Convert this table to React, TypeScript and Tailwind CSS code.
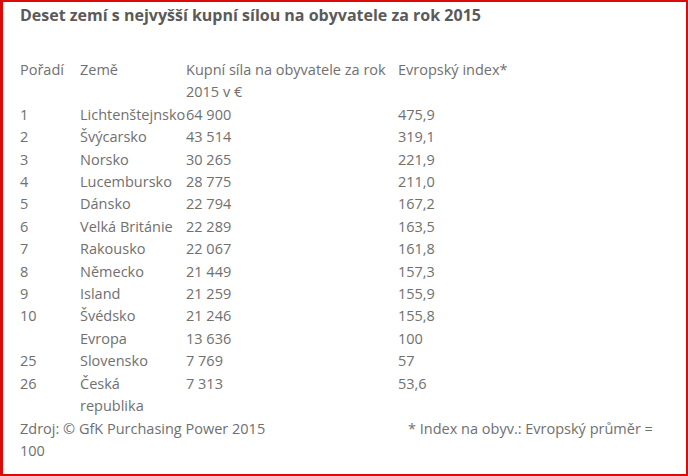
import React from 'react';

type Row = { rank: string; country: string[]; power: string; index: string };

const rows: Row[] = [
  { rank: '1', country: ['Lichtenštejnsko'], power: '64 900', index: '475,9' },
  { rank: '2', country: ['Švýcarsko'], power: '43 514', index: '319,1' },
  { rank: '3', country: ['Norsko'], power: '30 265', index: '221,9' },
  { rank: '4', country: ['Lucembursko'], power: '28 775', index: '211,0' },
  { rank: '5', country: ['Dánsko'], power: '22 794', index: '167,2' },
  { rank: '6', country: ['Velká Británie'], power: '22 289', index: '163,5' },
  { rank: '7', country: ['Rakousko'], power: '22 067', index: '161,8' },
  { rank: '8', country: ['Německo'], power: '21 449', index: '157,3' },
  { rank: '9', country: ['Island'], power: '21 259', index: '155,9' },
  { rank: '10', country: ['Švédsko'], power: '21 246', index: '155,8' },
  { rank: '', country: ['Evropa'], power: '13 636', index: '100' },
  { rank: '25', country: ['Slovensko'], power: '7 769', index: '57' },
  { rank: '26', country: ['Česká', 'republika'], power: '7 313', index: '53,6' }
];

const App = () => {
  return (
    <div className="w-[688px] h-[476px] bg-white border-[#dd0a0a] border-l-[3px] border-t-2 border-r-2 border-b-2 overflow-hidden font-['Open_Sans',sans-serif] text-[14.5px] text-[#707070]">
      <div className="pl-[17px] pt-[2px]">
        <h1 className="text-[16px] font-bold text-[#5a5a5a] leading-[22px]">
          Deset zemí s nejvyšší kupní sílou na obyvatele za rok 2015
        </h1>
        <div className="mt-[33px] grid grid-cols-[60px_106px_212px_1fr] leading-[22.4px]">
          <div>Pořadí</div>
          <div>Země</div>
          <div>
            Kupní síla na obyvatele za rok
            <br />
            2015 v €
          </div>
          <div>Evropský index*</div>
          {rows.map((row, idx) => (
            <React.Fragment key={idx}>
              <div>{row.rank}</div>
              <div className="whitespace-nowrap">
                {row.country.map((part, i) => (
                  <div key={i}>{part}</div>
                ))}
              </div>
              <div>{row.power}</div>
              <div>{row.index}</div>
            </React.Fragment>
          ))}
        </div>
        <p className="leading-[22.4px] whitespace-nowrap">
          <span className="inline-block w-[388px]">Zdroj: © GfK Purchasing Power 2015</span>* Index na obyv.: Evropský
          průměr =
          <br />
          100
        </p>
      </div>
    </div>
  );
};

export default App;
